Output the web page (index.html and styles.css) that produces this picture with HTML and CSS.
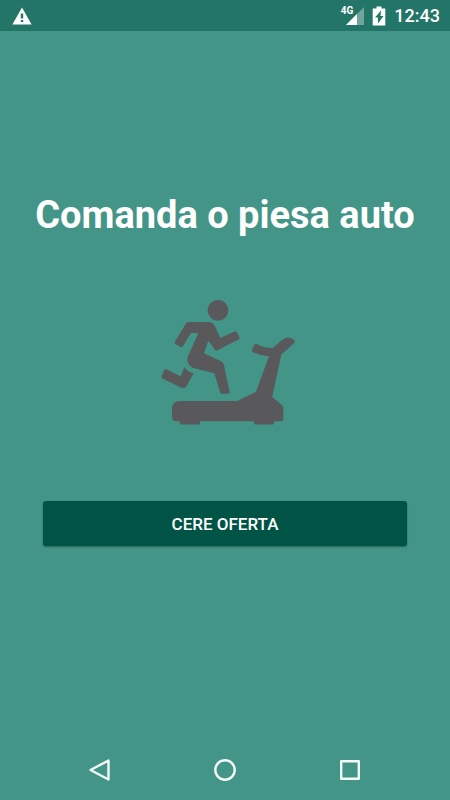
FILE: index.html
```
<!DOCTYPE html>
<html lang="ro">
<head>
  <meta charset="UTF-8">
  <meta name="viewport" content="width=device-width, initial-scale=1.0">
  <title>Comanda o piesa auto</title>
  <link rel="stylesheet" href="styles.css">
</head>
<body>
  <header class="status-bar">
    <svg class="warning-icon" width="20" height="18" viewBox="0 0 20 18">
      <path fill="#fff" fill-rule="evenodd" d="M10 .5 19.6 17.5H.4ZM8.8 6.5v5h2.4v-5ZM8.8 13v2h2.4v-2Z"/>
    </svg>
    <div class="status-right">
      <div class="signal">
        <span class="network">4G</span>
        <svg width="18" height="18" viewBox="0 0 18 18">
          <path fill="#fff" fill-opacity=".35" d="M18 0v18H0Z"/>
          <path fill="#fff" d="M11 7v11H0Z"/>
        </svg>
      </div>
      <svg width="14" height="20" viewBox="0 0 14 20">
        <path fill="#fff" fill-rule="evenodd" d="M4.500 .5h5v2h3.800V19.500H.7V2.500h3.800ZM9 4.500 3 11.500h3V17.500l5.500-7.500H8.500Z"/>
      </svg>
      <span class="clock">12:43</span>
    </div>
  </header>

  <main class="content">
    <h1>Comanda o piesa auto</h1>
    <svg class="logo" width="150" height="140" viewBox="-10 -8 150 140" fill="#59595b">
      <circle cx="58" cy="12.300" r="10.400"/>
      <path d="M28.500 24H49Q53 24 54.800 28L60.300 40 74.500 33.500Q76 33 77 34.500L79.500 39Q80 40.500 78.500 41.500L56 53 48.300 42.700 44 55.300 61.500 63.500Q63.500 64.500 64 67L69.600 94Q69.800 95.700 68 95.700H62Q60.500 95.700 60 94L54.300 75.300 35 70.500C29 69 25.500 63 28.300 57.500L38.300 35.300 31 34.700 22.700 48.500Q22 49.600 20.700 49L15.500 46Q14 45 15 43.500L26 25.500Q27 24 28.500 24Z"/>
      <path d="M24.300 69Q27.500 74.500 33.700 75L27 87.500Q25.300 91 21.500 89.700L2.500 80.500Q1 79.500 1.700 78L4 72.500Q5 70.500 7 71.500L20.700 78.500Z"/>
      <path d="M20 103H77.300L96 93.700 109 58.300Q101 58 92.500 54Q91.300 53 92 51.500L94.500 46.500Q95.300 45.300 97 46Q104 50.300 112.700 50L122 42Q128.500 37 134.500 42.500 135.500 43.500 134.500 44.700L121.300 56.500 112.300 98.700 122.300 107.500Q123.300 108.500 123.300 110V121Q123.300 123.300 121 123.300H114V125Q114 126.600 112.500 126.600H95.500Q94 126.600 94 125V123.300H40V125Q40 126.600 38.500 126.600H21.200Q19.700 126.600 19.700 125V123.300H16Q12 123.300 12 119.500V111Q12 103 20 103Z"/>
    </svg>
    <button class="offer-btn" type="button">CERE OFERTA</button>
  </main>

  <nav class="nav-bar">
    <button type="button" aria-label="Back">
      <svg width="24" height="26" viewBox="0 0 24 26">
        <path d="M20.500 3.500v19L2.500 13Z"/>
      </svg>
    </button>
    <button type="button" aria-label="Home">
      <svg width="24" height="24" viewBox="0 0 24 24">
        <circle cx="12" cy="12" r="9.700"/>
      </svg>
    </button>
    <button type="button" aria-label="Recent apps">
      <svg width="24" height="24" viewBox="0 0 24 24">
        <rect x="3.200" y="3.200" width="17.600" height="17.600"/>
      </svg>
    </button>
  </nav>
</body>
</html>
```

FILE: styles.css
```
* {
  box-sizing: border-box;
}
body {
  margin: 0;
  min-height: 100vh;
  display: flex;
  flex-direction: column;
  font-family: Roboto, "Liberation Sans", sans-serif;
  background: #439587;
  color: #fff;
}
button {
  border: none;
  padding: 0;
  font-family: inherit;
  color: inherit;
  cursor: pointer;
}
svg {
  display: block;
}

/* status bar */
.status-bar {
  height: 31px;
  padding: 0 10px 0 12px;
  display: flex;
  align-items: center;
  justify-content: space-between;
  background: #237567;
}
.status-right {
  display: flex;
  align-items: center;
  gap: 8px;
}
.signal {
  display: flex;
  position: relative;
}
.network {
  position: absolute;
  right: 11px;
  top: -2px;
  font-size: 10px;
  line-height: 12px;
  font-weight: bold;
}
.clock {
  font-size: 18px;
  line-height: 20px;
  font-weight: 500;
}

/* content */
.content {
  flex: 1;
  display: flex;
  flex-direction: column;
  align-items: center;
  padding: 160px 20px 0;
}
h1 {
  margin: 0;
  font-size: 38px;
  line-height: 48px;
  font-weight: bold;
  text-align: center;
}
.logo {
  margin-top: 51px;
}
.offer-btn {
  width: calc(100% - 46px);
  height: 45px;
  margin-top: 71px;
  border-radius: 3px;
  background: #005446;
  font-size: 17px;
  font-weight: 500;
  box-shadow: 0 1px 2px rgba(0, 0, 0, 0.35);
}

/* navigation bar */
.nav-bar {
  height: 60px;
  display: flex;
  align-items: center;
  justify-content: center;
  gap: 101px;
}
.nav-bar button {
  background: none;
}
.nav-bar svg {
  fill: none;
  stroke: #f4f8f7;
  stroke-width: 2.4;
  stroke-linejoin: round;
}
```
